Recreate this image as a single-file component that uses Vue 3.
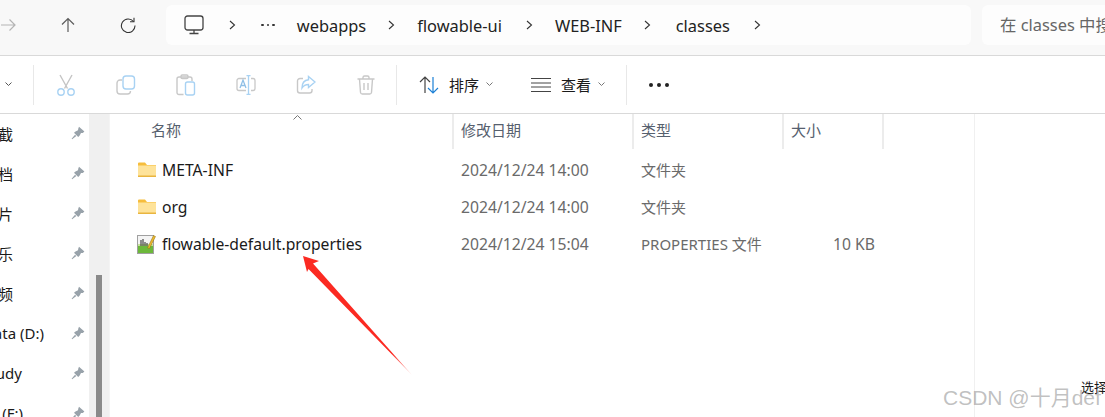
<script setup>
const pinned = [
  { label: '截', end: 13 },
  { label: '文档', end: 13 },
  { label: '图片', end: 13 },
  { label: '音乐', end: 13 },
  { label: '视频', end: 13 },
  { label: 'Data (D:)', end: 44 },
  { label: 'Study', end: 22 },
  { label: 'Soft (F:)', end: 23 }
]

const files = [
  { name: 'META-INF', date: '2024/12/24 14:00', type: '文件夹', size: '', folder: true },
  { name: 'org', date: '2024/12/24 14:00', type: '文件夹', size: '', folder: true },
  { name: 'flowable-default.properties', date: '2024/12/24 15:04', type: 'PROPERTIES 文件', size: '10 KB', folder: false }
]
</script>

<template>
  <div class="window">
    <div class="navbar">
      <div class="nav-slot">
        <svg width="16" height="16" viewBox="0 0 16 16" fill="none" stroke="#b4b4b4" stroke-width="1.2"><path d="M1 8h14M9.500 2.500 15 8l-5.500 5.500" /></svg>
      </div>
      <div class="nav-slot">
        <svg width="16" height="16" viewBox="0 0 16 16" fill="none" stroke="#5c5c5c" stroke-width="1.2"><path d="M8 15V1.500M2 7.500l6-6 6 6" /></svg>
      </div>
      <div class="nav-slot">
        <svg width="16" height="16" viewBox="0 0 16 16" fill="none" stroke="#333" stroke-width="1.1"><path d="M13.500 4.500A6.800 6.800 0 1 0 15 8.500" /><path d="M14 .8v4h-4" /></svg>
      </div>
      <div class="crumbs">
        <svg class="monitor" width="20" height="20" viewBox="0 0 20 20" fill="none" stroke="#444" stroke-width="1.300"><rect x="1" y="1" width="18" height="14" rx="2.500" /><path d="M10 15v3M5.500 18.500h9" /></svg>
        <svg class="chev first-chev" width="7" height="10" viewBox="0 0 7 10" fill="none" stroke="#333" stroke-width="1.100"><path d="m1 1 4.500 4L1 9" /></svg>
        <div class="dots"><i></i><i></i><i></i></div>
        <span>webapps</span>
        <svg class="chev" width="7" height="10" viewBox="0 0 7 10" fill="none" stroke="#333" stroke-width="1.100"><path d="m1 1 4.500 4L1 9" /></svg>
        <span class="mid-crumb">flowable-ui</span>
        <svg class="chev" width="7" height="10" viewBox="0 0 7 10" fill="none" stroke="#333" stroke-width="1.100"><path d="m1 1 4.500 4L1 9" /></svg>
        <span>WEB-INF</span>
        <svg class="chev" width="7" height="10" viewBox="0 0 7 10" fill="none" stroke="#333" stroke-width="1.100"><path d="m1 1 4.500 4L1 9" /></svg>
        <span class="last-crumb">classes</span>
        <svg class="chev" width="7" height="10" viewBox="0 0 7 10" fill="none" stroke="#333" stroke-width="1.100"><path d="m1 1 4.500 4L1 9" /></svg>
      </div>
      <div class="search">在 classes 中搜索</div>
    </div>

    <div class="toolbar">
      <div class="tool-first">
        <svg width="7" height="5" viewBox="0 0 7 5" fill="none" stroke="#555"><path d="m.5 .5 3 3 3-3" /></svg>
      </div>
      <div class="divider"></div>
      <div class="tool tool-start">
        <svg width="20" height="22" viewBox="0 0 20 22" fill="none" stroke-width="1.400"><path d="M4 1l7.500 13.500M16 1 8.500 14.500" stroke="#c4c4c4" /><circle cx="5" cy="18" r="3.200" stroke="#a8d2f3" /><circle cx="15" cy="18" r="3.200" stroke="#a8d2f3" /></svg>
      </div>
      <div class="tool">
        <svg width="20" height="20" viewBox="0 0 20 20" fill="none" stroke-width="1.400"><path d="M6 5H4A3 3 0 0 0 1 8v8a3 3 0 0 0 3 3h7.500a3 3 0 0 0 3-3" stroke="#c8c8c8" /><rect x="7" y="1" width="11.500" height="13" rx="3" stroke="#a8d2f3" /></svg>
      </div>
      <div class="tool">
        <svg width="20" height="22" viewBox="0 0 20 22" fill="none" stroke-width="1.400"><path d="M7.500 20.500H3A2 2 0 0 1 1 18.500V5a2 2 0 0 1 2-2h11a2 2 0 0 1 2 2v2" stroke="#c8c8c8" /><rect x="5" y="1" width="7" height="3.500" rx="1.200" stroke="#c8c8c8" /><rect x="9.500" y="8" width="9" height="13" rx="2" stroke="#a8d2f3" /></svg>
      </div>
      <div class="tool">
        <svg width="20" height="20" viewBox="0 0 20 20" fill="none" stroke-width="1.300"><path d="M10 3.500H3A2 2 0 0 0 1 5.500v8a2 2 0 0 0 2 2h7M15 3.500h2A2 2 0 0 1 19 5.500v8a2 2 0 0 1-2 2h-2" stroke="#c8c8c8" /><path d="m4 13 3-8 3 8M5 10.500h4" stroke="#8fbfe6" /><path d="M12.500 .5v19M10.500 .5h4M10.500 19.500h4" stroke="#a8d2f3" /></svg>
      </div>
      <div class="tool">
        <svg width="20" height="20" viewBox="0 0 20 20" fill="none" stroke-width="1.400"><path d="M7 3.500H4A2.500 2.500 0 0 0 1.500 6v9.500A2.500 2.500 0 0 0 4 18h9.500a2.500 2.500 0 0 0 2.500-2.500V14" stroke="#c8c8c8" /><path d="M12.500 1.500 19 7l-6.500 5.500V9.500c-3 0-5 1-6.500 3.500 0-5 2.500-7.800 6.500-8.200Z" stroke="#a8d2f3" /></svg>
      </div>
      <div class="tool">
        <svg width="18" height="20" viewBox="0 0 18 20" fill="none" stroke="#c8c8c8" stroke-width="1.400"><path d="M.5 4h17M6 4V2.500A1.500 1.500 0 0 1 7.500 1h3A1.500 1.500 0 0 1 12 2.500V4M2.500 4l1 13.500A1.800 1.800 0 0 0 5.300 19h7.400a1.800 1.800 0 0 0 1.800-1.500l1-13.500M7 8v7M11 8v7" /></svg>
      </div>
      <div class="divider"></div>
      <div class="tool-text tool-sort">
        <svg width="20" height="18" viewBox="0 0 20 18" fill="none" stroke-width="1.200"><path d="M6 17V1M1 6l5-5 5 5" stroke="#444" /><path d="M14 1v16M9 12l5 5 5-5" stroke="#1c80d6" /></svg>
        <span class="tool-label">排序</span>
        <svg class="small-chev" width="7" height="5" viewBox="0 0 7 5" fill="none" stroke="#777"><path d="m.5 .5 3 3 3-3" /></svg>
      </div>
      <div class="tool-text tool-view">
        <svg width="20" height="14" viewBox="0 0 20 14" fill="none" stroke="#444"><path d="M0 .5h20M0 5h20M0 9h20M0 13.500h20" /></svg>
        <span class="tool-label">查看</span>
        <svg class="small-chev" width="7" height="5" viewBox="0 0 7 5" fill="none" stroke="#777"><path d="m.5 .5 3 3 3-3" /></svg>
      </div>
      <div class="divider"></div>
      <div class="more">
        <i></i><i></i><i></i>
      </div>
    </div>

    <div class="body">
      <div class="sidebar">
        <div v-for="item in pinned" :key="item.label" class="side-row">
          <div class="side-label" :style="{ width: item.end + 'px' }"><span>{{ item.label }}</span></div>
          <svg class="pin" width="14" height="14" viewBox="0 0 14 14" fill="#98a2aa"><path d="M8 .8 13.400 5.600 11.800 7 10 7 8.700 9.500 7.200 11 3 6.800 4.500 5.400 7 4.300 7.300 2.500Z" /><path d="M4 8.800 5.300 10 1.200 13.300 .6 12.700Z" /></svg>
        </div>
      </div>
      <div class="scrolltrack">
        <div class="thumb"></div>
      </div>

      <div class="main">
        <div class="head">
          <div class="col col-name">名称</div>
          <div class="col col-date">修改日期</div>
          <div class="col col-type">类型</div>
          <div class="col col-size">大小</div>
          <svg class="sort-caret" width="9" height="5" viewBox="0 0 9 5" fill="none" stroke="#777"><path d="m.5 4.500 4-4 4 4" /></svg>
        </div>
        <div v-for="f in files" :key="f.name" class="row">
          <div class="cell-name">
            <svg v-if="f.folder" class="icon-folder" width="18" height="15" viewBox="0 0 18 15">
              <path d="M0 1.500A1 1 0 0 1 1 .5h6L9 3h9v11H0Z" fill="#f6bd3c" />
              <rect x="0" y="3.500" width="18" height="10.500" fill="#fee39a" />
              <rect x="0" y="13.500" width="18" height="1.500" fill="#e9b53f" />
            </svg>
            <svg v-else class="icon-file" width="19" height="20" viewBox="0 0 19 20">
              <rect x=".5" y="1.500" width="16" height="18" fill="#f4f4f4" stroke="#a0a0a0" />
              <rect x="1" y="12" width="15" height="7" fill="#6cb83a" />
              <rect x="1" y="10" width="15" height="2" fill="#c6e29a" />
              <path d="M4 6v6M6 5v7M8 8v4M10 9v3" stroke="#444" stroke-width="1.200" />
              <path d="M10.500 14 16.500 1.500l2 1-6 12Z" fill="#eab72c" stroke="#8a6d16" stroke-width=".5" />
            </svg>
            <span class="file-name">{{ f.name }}</span>
          </div>
          <div class="cell-date">{{ f.date }}</div>
          <div class="cell-type">{{ f.type }}</div>
          <div class="cell-size">{{ f.size }}</div>
        </div>
      </div>
      <div class="detail">
        <span class="status">选择</span>
      </div>
    </div>

    <svg class="arrow" width="1105" height="417" viewBox="0 0 1105 417">
      <defs>
        <linearGradient id="tail" gradientUnits="userSpaceOnUse" x1="392" y1="353" x2="412" y2="375">
          <stop offset="0" stop-color="#fb2a22" />
          <stop offset="1" stop-color="#fb2a22" stop-opacity="0.25" />
        </linearGradient>
      </defs>
      <path d="M303 256 319 261 313 263.500 412 375 308.500 269 307 272Z" fill="url(#tail)" />
    </svg>
    <div class="watermark">CSDN @十月def</div>
  </div>
</template>

<style>
html,
body {
  margin: 0;
  background: #fff;
}
</style>

<style scoped>
.window {
  position: relative;
  width: 1105px;
  height: 417px;
  overflow: hidden;
  display: flex;
  flex-direction: column;
  font-family: "Noto Sans", "Noto Sans CJK SC", sans-serif;
  color: #1a1a1a;
  background: #fff;
}

.navbar {
  height: 55px;
  flex: none;
  display: flex;
  align-items: flex-start;
  margin-left: -22px;
  background: #f8f8f8;
  border-bottom: 1px solid #d9d9d9;
}

.nav-slot {
  width: 60px;
  height: 50px;
  flex: none;
  display: flex;
  align-items: center;
  justify-content: center;
}

.crumbs {
  margin: 5px 0 0 8px;
  width: 805px;
  height: 40px;
  flex: none;
  box-sizing: border-box;
  padding-left: 18px;
  display: flex;
  align-items: center;
  gap: 22px;
  background: #fdfdfd;
  border-radius: 6px;
  font-size: 16.4px;
  color: #222;
}

.monitor,
.first-chev {
  margin-right: 3px;
}

.mid-crumb {
  margin-right: 2px;
}

.last-crumb {
  margin: 0 2px 0 3px;
}

.dots {
  display: flex;
  gap: 3px;
}

.dots i {
  width: 2.600px;
  height: 2.600px;
  border-radius: 50%;
  background: #333;
}

.search {
  margin: 5px 0 0 11px;
  width: 200px;
  height: 40px;
  flex: none;
  box-sizing: border-box;
  padding-left: 18px;
  line-height: 40px;
  white-space: nowrap;
  overflow: hidden;
  background: #fdfdfd;
  border-radius: 6px;
  font-size: 16.4px;
  color: #666;
}

.toolbar {
  height: 57px;
  flex: none;
  display: flex;
  align-items: center;
  background: #fff;
  border-bottom: 1px solid #d9d9d9;
}

.tool-first {
  width: 33px;
  padding-left: 5px;
  box-sizing: border-box;
  display: flex;
}

.divider {
  width: 1px;
  height: 40px;
  flex: none;
  background: #e8e8e8;
}

.tool {
  width: 60px;
  flex: none;
  display: flex;
  justify-content: center;
}

.tool-start {
  margin-left: 2px;
}

.tool-text {
  flex: none;
  display: flex;
  align-items: center;
}

.tool-sort {
  margin-left: 22px;
  width: 112px;
}

.tool-view {
  width: 95px;
}

.tool-label {
  margin-left: 10px;
  font-size: 15px;
}

.small-chev {
  margin-left: 7px;
}

.more {
  margin-left: 22px;
  display: flex;
  gap: 4px;
}

.more i {
  width: 4px;
  height: 4px;
  border-radius: 50%;
  background: #222;
}

.body {
  flex: 1;
  min-height: 0;
  display: flex;
}

.sidebar {
  width: 89px;
  flex: none;
  overflow: hidden;
  display: flex;
  flex-direction: column;
  margin-top: -1px;
}

.side-row {
  height: 40px;
  flex: none;
  display: flex;
  align-items: center;
  font-size: 15px;
  color: #1a1a1a;
}

.side-label {
  flex: none;
  display: flex;
  justify-content: flex-end;
  white-space: nowrap;
}

.pin {
  flex: none;
  margin-left: auto;
  margin-right: 4px;
}

.scrolltrack {
  width: 20px;
  flex: none;
  background: #f0f0f0;
  padding-left: 7px;
  box-sizing: border-box;
  display: flex;
  flex-direction: column;
}

.thumb {
  margin-top: 161px;
  width: 6px;
  flex: 1;
  background: #8a8a8a;
}

.main {
  width: 866px;
  flex: none;
  box-sizing: border-box;
  border-left: 1px solid #f4f4f4;
  border-right: 1px solid #f0f0f0;
}

.head {
  position: relative;
  height: 35px;
  margin-bottom: 2px;
  display: grid;
  grid-template-columns: 344px 180px 150px 100px;
  font-size: 15px;
  color: #56606e;
}

.col {
  box-sizing: border-box;
  padding-left: 7px;
  line-height: 33px;
  border-right: 2px solid #ececec;
}

.col-name {
  padding-left: 41px;
}

.sort-caret {
  position: absolute;
  left: 183px;
  top: 1px;
}

.row {
  display: grid;
  grid-template-columns: 344px 180px 150px 100px;
  height: 37px;
  align-items: center;
  font-size: 15px;
  color: #6a6a6a;
}

.cell-name {
  padding-left: 28px;
  display: flex;
  align-items: center;
  gap: 6px;
}

.cell-name svg {
  flex: none;
}

.icon-file {
  margin-left: -1px;
}

.file-name {
  font-size: 15.700px;
  color: #1a1a1a;
  white-space: nowrap;
}

.cell-date {
  padding-left: 7px;
  font-size: 15.700px;
  white-space: nowrap;
}

.cell-type {
  padding-left: 7px;
  white-space: nowrap;
}

.cell-size {
  padding-right: 9px;
  font-size: 15.700px;
  text-align: right;
  white-space: nowrap;
}

.detail {
  flex: 1;
  position: relative;
}

.status {
  position: absolute;
  left: 106px;
  top: 263px;
  font-size: 13px;
  white-space: nowrap;
}

.arrow {
  position: absolute;
  left: 0;
  top: 0;
  pointer-events: none;
}

.watermark {
  position: absolute;
  left: 943px;
  top: 381px;
  font-family: "Liberation Sans", "Noto Sans CJK SC", sans-serif;
  font-size: 21px;
  color: rgba(140, 140, 140, 0.55);
  white-space: nowrap;
}
</style>
